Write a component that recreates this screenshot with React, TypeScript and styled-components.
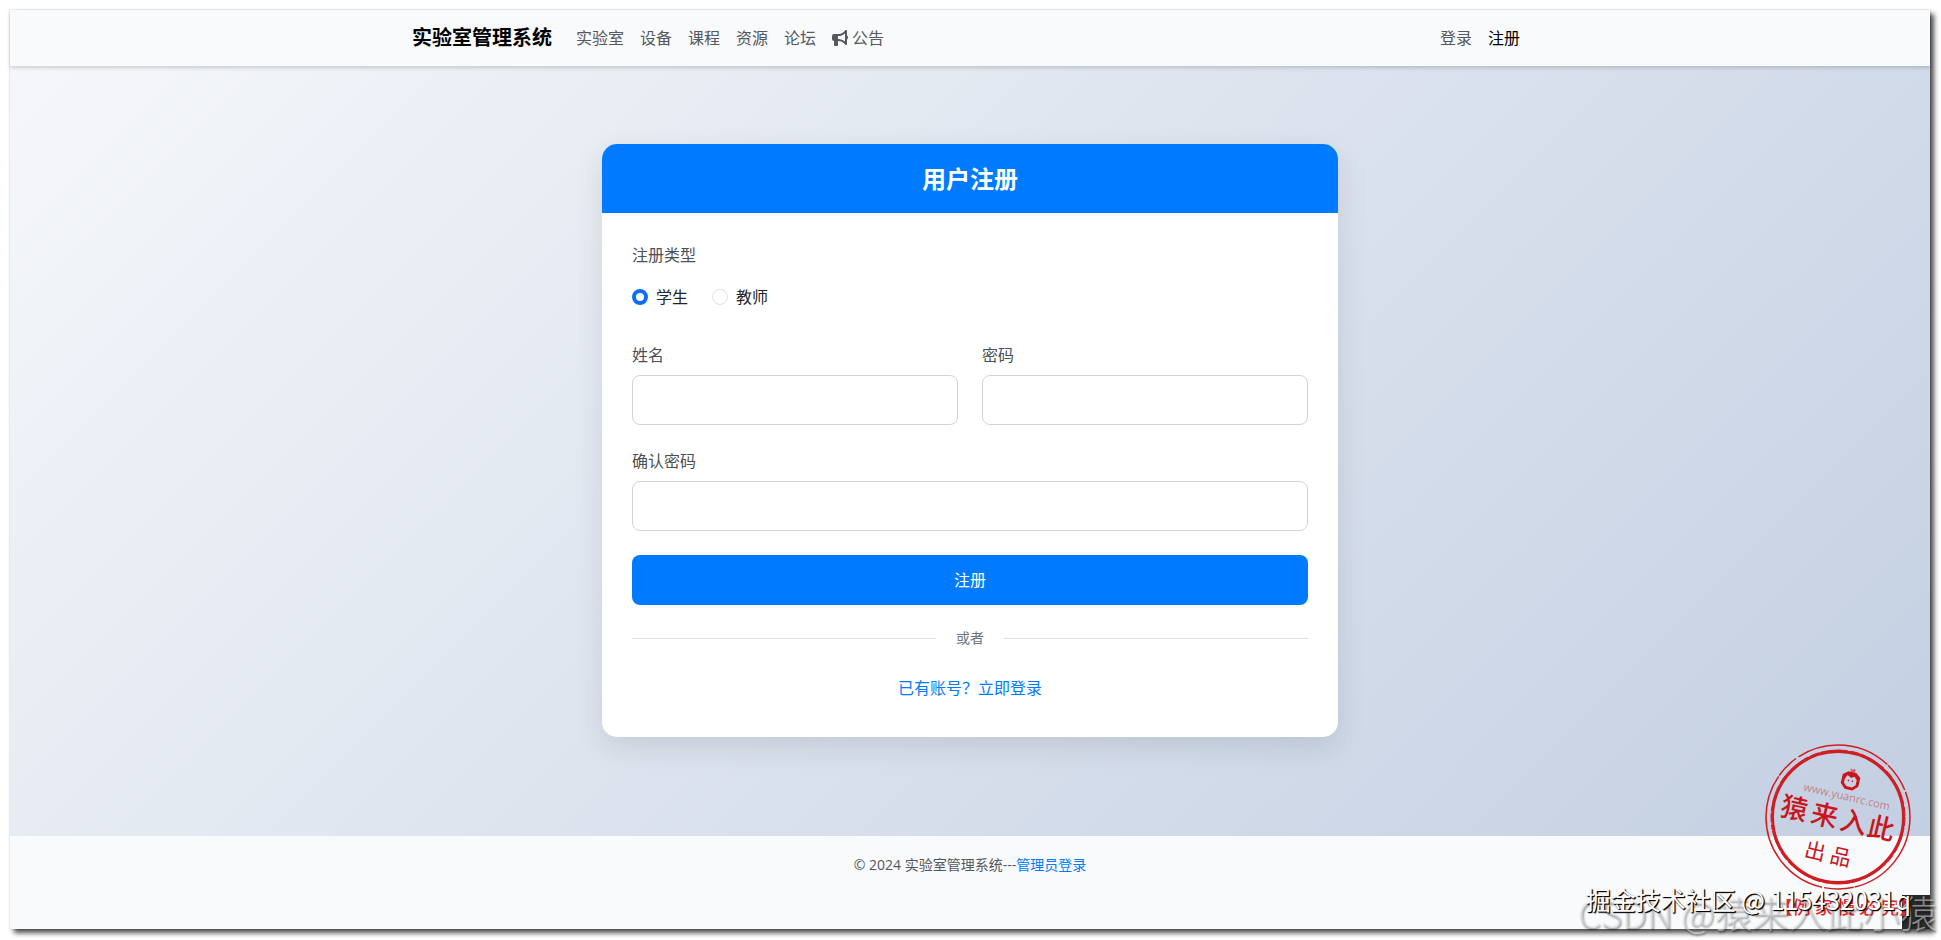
import React from 'react';
import styled, { createGlobalStyle } from 'styled-components';
import { FaBullhorn } from 'react-icons/fa6';

const GlobalStyle = createGlobalStyle`
  *, *::before, *::after { box-sizing: border-box; }
  body {
    margin: 0;
    background: #fff;
    color: #212529;
    font: 16px/24px "Open Sans", "Noto Sans CJK SC", sans-serif;
  }
  a { text-decoration: none; }
`;

const Page = styled.div`
  min-height: 100vh;
  padding: 10px 11px 11px 10px;
  display: flex;
  position: relative;
  overflow: hidden;
`;

const Window = styled.div`
  flex: 1;
  display: flex;
  flex-direction: column;
  box-shadow: 0 0 1px 1px rgba(0, 0, 0, 0.06), 4px 4px 5px rgba(0, 0, 0, 0.7);
`;

const Navbar = styled.header`
  position: relative;
  background: #f8fafc;
  box-shadow: 0 2px 4px rgba(0, 0, 0, 0.16);
`;

const NavInner = styled.div`
  max-width: 1140px;
  height: 56px;
  margin: 0 auto;
  padding: 0 12px;
  display: flex;
  align-items: center;
`;

const Brand = styled.a`
  margin-right: 16px;
  color: #000;
  font-size: 20px;
  line-height: 30px;
  font-weight: 700;
`;

const NavGroup = styled.nav`
  display: flex;
  &:last-child { margin-left: auto; }
`;

const NavLink = styled.a<{ $active?: boolean }>`
  display: flex;
  align-items: center;
  gap: 4px;
  padding: 8px;
  color: ${({ $active }) => ($active ? '#000' : '#55585c')};
`;

const Main = styled.main`
  flex: 1;
  padding: 78px 20px 99px;
  background: linear-gradient(135deg, #f5f7fa 0%, #c3cfe2 100%);
`;

const Card = styled.section`
  max-width: 736px;
  margin: 0 auto;
  overflow: hidden;
  border-radius: 15px;
  background: #fff;
  box-shadow: 0 10px 30px rgba(0, 0, 0, 0.1);
`;

const CardTitle = styled.h1`
  margin: 0;
  padding: 20px;
  background: #007bff;
  color: #fff;
  text-align: center;
  font-size: 24px;
  line-height: 29px;
  font-weight: 700;
`;

const Form = styled.form`
  padding: 30px;
  display: grid;
  grid-template-columns: 1fr 1fr;
  gap: 24px;
`;

const Wide = styled.div`
  grid-column: 1 / -1;
`;

const TypeGroup = styled.fieldset`
  grid-column: 1 / -1;
  margin: 0 0 10px;
  padding: 0;
  border: 0;
`;

const Legend = styled.legend`
  padding: 0;
  margin-bottom: 18px;
  color: #495057;
`;

const Radios = styled.div`
  display: flex;
  gap: 24px;
`;

const RadioLabel = styled.label`
  display: flex;
  align-items: center;
  gap: 8px;
`;

const Radio = styled.input`
  appearance: none;
  width: 16px;
  height: 16px;
  margin: 0;
  border: 1px solid #dee2e6;
  border-radius: 50%;
  background: #fff;
  &:checked { border: 4px solid #0d6efd; }
`;

const Label = styled.label`
  display: block;
  margin-bottom: 8px;
  color: #495057;
`;

const Input = styled.input`
  display: block;
  width: 100%;
  height: 50px;
  padding: 12px;
  border: 1px solid #ced4da;
  border-radius: 8px;
  background: #fff;
  font: inherit;
`;

const Submit = styled.button`
  grid-column: 1 / -1;
  height: 50px;
  border: 0;
  border-radius: 8px;
  background: #007bff;
  color: #fff;
  font: inherit;
`;

const Divider = styled.div`
  grid-column: 1 / -1;
  display: flex;
  align-items: center;
  gap: 20px;
  color: #6c757d;
  font-size: 14px;
  line-height: 18px;
  &::before, &::after {
    content: "";
    flex: 1;
    height: 1px;
    background: #dee2e6;
  }
`;

const LoginLine = styled.p`
  grid-column: 1 / -1;
  margin: 5px 0 7px;
  text-align: center;
`;

const TextLink = styled.a`
  color: #007bff;
`;

const Footer = styled.footer`
  padding: 18px 20px 53px;
  background: #f8fafc;
  color: #55585c;
  text-align: center;
  font-size: 14px;
  line-height: 22px;
`;

const Corner = styled.div`
  position: absolute;
  right: 11px;
  bottom: 11px;
  width: 28px;
  height: 34px;
  background: #2a2a2a;
`;

const Mark = styled.div`
  position: absolute;
  white-space: nowrap;
  pointer-events: none;
`;

const RedMark = styled(Mark)`
  right: 24px;
  bottom: 20px;
  color: #dd2a30;
  font: 500 18px/28px "Noto Sans CJK SC", sans-serif;
`;

const GreyMark = styled(Mark)`
  right: 4px;
  bottom: 6px;
  color: rgba(225, 227, 230, 0.55);
  text-shadow: 1px 2px 2px rgba(0, 0, 0, 0.4);
  font: 300 37px/44px "Noto Sans CJK SC", sans-serif;
`;

const AuthorMark = styled(Mark)`
  right: 30px;
  bottom: 24px;
  color: #fff;
  text-shadow: 1px 1px 1px #000, 1px 1px 1px #000;
  font: 25px/34px "Noto Sans CJK SC", sans-serif;
`;

const Seal = styled.svg`
  position: absolute;
  right: 28px;
  bottom: 48px;
  width: 150px;
  height: 150px;
  pointer-events: none;
`;

const links = ['实验室', '设备', '课程', '资源', '论坛'];

function SealStamp() {
  return (
    <Seal viewBox="-75 -75 150 150" fill="#c9151b" role="img" aria-label="猿来入此 出品">
      <g fill="none" stroke="#cf1d22">
        <circle r="72" strokeWidth="1.5" strokeDasharray="96 1 30 2 140 1 24 3" />
        <circle r="65.5" strokeWidth="3" />
        <circle r="67" strokeWidth="1" strokeDasharray="9 2 21 1 5 3" />
      </g>
      <g transform="rotate(13)" fontFamily="'Noto Sans CJK SC', sans-serif">
        <g transform="translate(4 -38)">
          <path
            fillRule="evenodd"
            d="M-4-9 4-9 9-5 9 4 4 9-4 9-9 4-9-5ZM-4-5-6-1-6 3-3 6 3 6 6 3 6-2 3-5 0-3Z"
          />
          <circle cx="-2" cy="0" r=".8" />
          <circle cx="2" cy="0" r=".8" />
          <path d="M-1-9-3-12-1-12 0-11 1-13 3-11 2-9Z" opacity=".6" />
        </g>
        <text x="4" y="-18" textAnchor="middle" fontSize="11" opacity=".45" fontFamily="Open Sans, sans-serif">www.yuanrc.com</text>
        <text x="-58 -27 3 31" y="11" fontSize="27" fontWeight="500" fontFamily="'Noto Sans CJK SC', serif">猿来入此</text>
        <text x="-25 1" y="46" fontSize="21" fontWeight="400">出品</text>
      </g>
    </Seal>
  );
}

export default function App() {
  return (
    <>
      <GlobalStyle />
      <Page>
        <Window>
          <Navbar>
            <NavInner>
              <Brand href="#">实验室管理系统</Brand>
              <NavGroup>
                {links.map((name) => (
                  <NavLink href="#" key={name}>{name}</NavLink>
                ))}
                <NavLink href="#"><FaBullhorn size={16} />公告</NavLink>
              </NavGroup>
              <NavGroup>
                <NavLink href="#">登录</NavLink>
                <NavLink href="#" $active>注册</NavLink>
              </NavGroup>
            </NavInner>
          </Navbar>
          <Main>
            <Card>
              <CardTitle>用户注册</CardTitle>
              <Form>
                <TypeGroup>
                  <Legend>注册类型</Legend>
                  <Radios>
                    <RadioLabel><Radio type="radio" name="type" defaultChecked />学生</RadioLabel>
                    <RadioLabel><Radio type="radio" name="type" />教师</RadioLabel>
                  </Radios>
                </TypeGroup>
                <div>
                  <Label htmlFor="name">姓名</Label>
                  <Input id="name" type="text" />
                </div>
                <div>
                  <Label htmlFor="password">密码</Label>
                  <Input id="password" type="password" />
                </div>
                <Wide>
                  <Label htmlFor="confirm">确认密码</Label>
                  <Input id="confirm" type="password" />
                </Wide>
                <Submit type="button">注册</Submit>
                <Divider>或者</Divider>
                <LoginLine><TextLink href="#">已有账号？立即登录</TextLink></LoginLine>
              </Form>
            </Card>
          </Main>
          <Footer>
            © 2024 实验室管理系统---<TextLink href="#">管理员登录</TextLink>
          </Footer>
        </Window>
        <Corner />
        <SealStamp />
        <RedMark>【例 家 慢 必 完】</RedMark>
        <GreyMark>CSDN @猿来入此小猿</GreyMark>
        <AuthorMark>掘金技术社区 @ 115432031q</AuthorMark>
      </Page>
    </>
  );
}
